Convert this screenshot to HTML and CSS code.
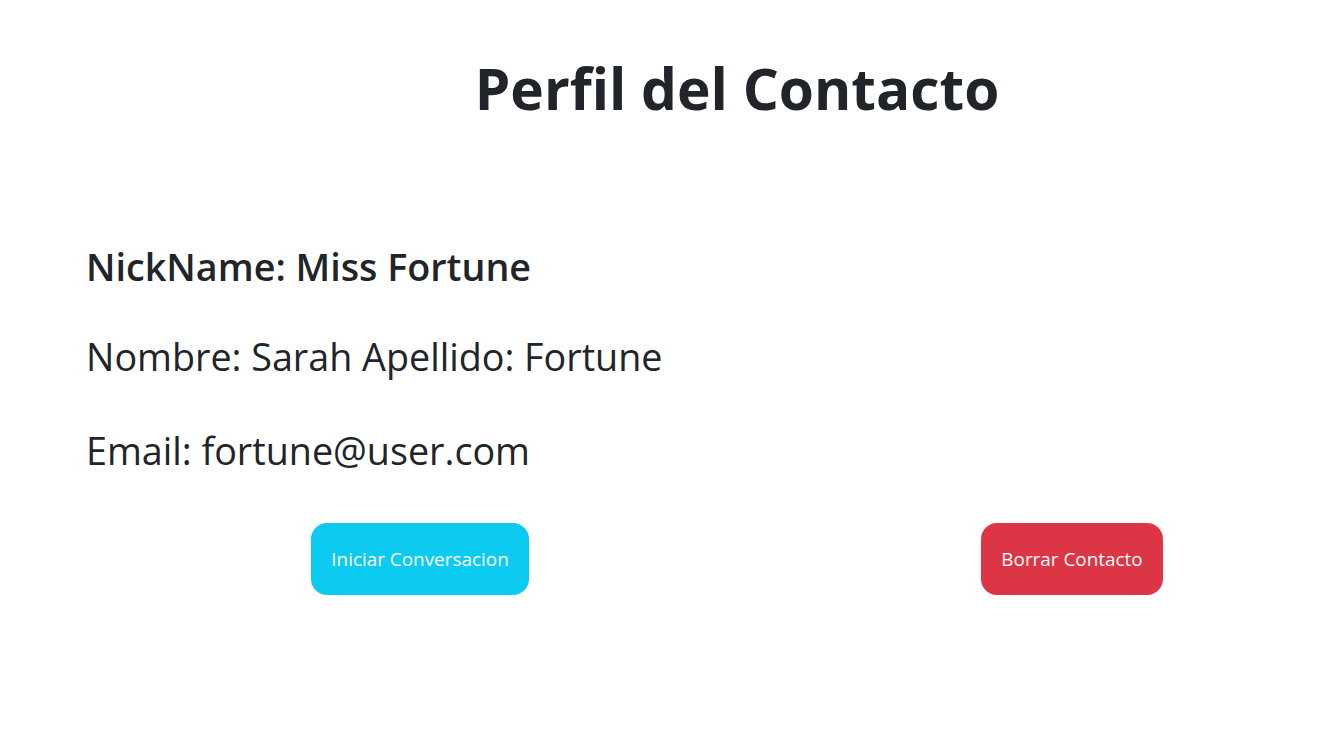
FILE: index.html
```html
<!DOCTYPE html>
<html lang="es">
<head>
<meta charset="utf-8">
<title>Perfil del Contacto</title>
<link rel="stylesheet" href="styles.css">
</head>
<body>
<main class="page">
  <h1 class="title">Perfil del Contacto</h1>
  <section class="details">
    <h2 class="nick">NickName: Miss Fortune</h2>
    <p class="line name">Nombre: Sarah Apellido: Fortune</p>
    <p class="line email">Email: fortune@user.com</p>
  </section>
  <div class="actions">
    <button class="btn btn-info">Iniciar Conversacion</button>
    <button class="btn btn-danger">Borrar Contacto</button>
  </div>
</main>
</body>
</html>
```
FILE: styles.css
```css
html, body {
  margin: 0;
  padding: 0;
  background: #fff;
}
body {
  font-family: "Open Sans", "Noto Sans", sans-serif;
  color: #212529;
}
.page {
  display: flex;
  flex-direction: column;
}
.title {
  margin: 0;
  padding: 54px 0 0 143px;
  text-align: center;
  font-size: 56.8px;
  font-weight: 700;
  line-height: 1.2;
}
.details {
  padding: 121.7px 0 0 86px;
}
.nick {
  margin: 0;
  font-size: 37.7px;
  font-weight: 600;
  line-height: 1.2;
}
.line {
  margin: 0;
  font-size: 37.7px;
  line-height: 1.2;
}
.name { margin-top: 44.75px; }
.email { margin-top: 48.75px; }
.actions {
  display: flex;
  justify-content: space-between;
  margin: 50px 0 0 311px;
  width: 852px;
}
.btn {
  border: 0;
  border-radius: 16px;
  height: 72px;
  padding: 0;
  font-family: inherit;
  font-size: 18.9px;
  color: #fff;
  cursor: pointer;
}
.btn-info { background: #0dcaf0; width: 218px; }
.btn-danger { background: #dc3545; width: 182px; }
```
